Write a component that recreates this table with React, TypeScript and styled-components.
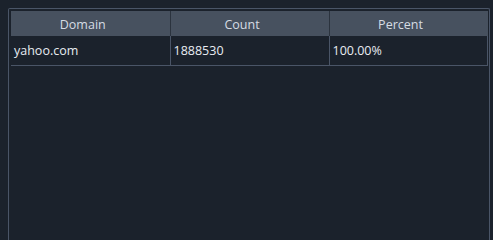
import React from "react";
import styled, { createGlobalStyle } from "styled-components";

const GlobalStyle = createGlobalStyle`
  html, body {
    margin: 0;
    padding: 0;
    background: #1b222c;
    overflow: hidden;
  }
  body {
    padding: 8px 0 0 8px;
    font-family: "Open Sans", "Noto Sans", "Liberation Sans", sans-serif;
  }
`;

const Frame = styled.div`
  box-sizing: border-box;
  width: 482px;
  height: 232px;
  border: 1px solid #4a5567;
  border-bottom: none;
  border-radius: 2px 2px 0 0;
  padding: 2px;
  background: #1b222c;
`;

const Table = styled.table`
  width: 476px;
  border-collapse: collapse;
  table-layout: fixed;
`;

const HeadCell = styled.th`
  height: 25px;
  box-sizing: border-box;
  padding: 2px 15px 0 0;
  background: #47515f;
  color: #d6dce4;
  font-size: 12.5px;
  font-weight: 400;
  text-align: center;
  border-left: 1px solid #2b333e;
  &:first-child {
    border-left: none;
  }
  &:last-child {
    border-right: 1px solid #47515f;
  }
`;

const BodyCell = styled.td`
  height: 29px;
  box-sizing: border-box;
  padding: 1px 0 0 3px;
  color: #e8ecf2;
  font-size: 12.5px;
  text-align: left;
  border-left: 1px solid #4a5567;
  border-bottom: 1px solid #4a5567;
  &:first-child {
    border-left: none;
  }
  &:last-child {
    border-right: 1px solid #4a5567;
  }
`;

const rows = [{ domain: "yahoo.com", count: "1888530", percent: "100.00%" }];

export default function App() {
  return (
    <>
      <GlobalStyle />
      <Frame>
        <Table>
          <colgroup>
            <col style={{ width: 159 }} />
            <col style={{ width: 159 }} />
            <col style={{ width: 158 }} />
          </colgroup>
          <thead>
            <tr>
              <HeadCell>Domain</HeadCell>
              <HeadCell>Count</HeadCell>
              <HeadCell>Percent</HeadCell>
            </tr>
          </thead>
          <tbody>
            {rows.map((r) => (
              <tr key={r.domain}>
                <BodyCell>{r.domain}</BodyCell>
                <BodyCell>{r.count}</BodyCell>
                <BodyCell>{r.percent}</BodyCell>
              </tr>
            ))}
          </tbody>
        </Table>
      </Frame>
    </>
  );
}
